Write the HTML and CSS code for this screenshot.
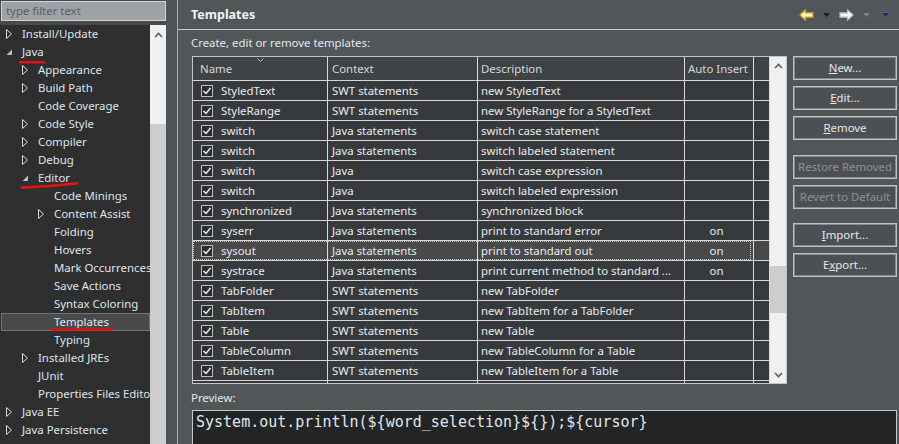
FILE: index.html
```html
<!DOCTYPE html>
<html>
<head>
<meta charset="utf-8">
<link rel="stylesheet" href="styles.css">
</head>
<body>
<div class="left">
  <div class="filter">type filter text</div>
  <div class="tree">
    <div class="tree-list">
      <div class="ti l0"><span class="exp"><svg class="tri-c" width="7" height="10" viewBox="0 0 7 10"><polygon points="0.5,0.5 5.5,5 0.5,9.5"/></svg></span>Install/Update</div>
      <div class="ti l0"><span class="exp"><svg class="tri-o" width="7" height="7" viewBox="0 0 7 7"><polygon points="6,0.5 6,6 0.5,6"/></svg></span>Java</div>
      <div class="ti l1"><span class="exp"><svg class="tri-c" width="7" height="10" viewBox="0 0 7 10"><polygon points="0.5,0.5 5.5,5 0.5,9.5"/></svg></span>Appearance</div>
      <div class="ti l1"><span class="exp"><svg class="tri-c" width="7" height="10" viewBox="0 0 7 10"><polygon points="0.5,0.5 5.5,5 0.5,9.5"/></svg></span>Build Path</div>
      <div class="ti l1"><span class="exp"></span>Code Coverage</div>
      <div class="ti l1"><span class="exp"><svg class="tri-c" width="7" height="10" viewBox="0 0 7 10"><polygon points="0.5,0.5 5.5,5 0.5,9.5"/></svg></span>Code Style</div>
      <div class="ti l1"><span class="exp"><svg class="tri-c" width="7" height="10" viewBox="0 0 7 10"><polygon points="0.5,0.5 5.5,5 0.5,9.5"/></svg></span>Compiler</div>
      <div class="ti l1"><span class="exp"><svg class="tri-c" width="7" height="10" viewBox="0 0 7 10"><polygon points="0.5,0.5 5.5,5 0.5,9.5"/></svg></span>Debug</div>
      <div class="ti l1"><span class="exp"><svg class="tri-o" width="7" height="7" viewBox="0 0 7 7"><polygon points="6,0.5 6,6 0.5,6"/></svg></span>Editor</div>
      <div class="ti l2"><span class="exp"></span>Code Minings</div>
      <div class="ti l2"><span class="exp"><svg class="tri-c" width="7" height="10" viewBox="0 0 7 10"><polygon points="0.5,0.5 5.5,5 0.5,9.5"/></svg></span>Content Assist</div>
      <div class="ti l2"><span class="exp"></span>Folding</div>
      <div class="ti l2"><span class="exp"></span>Hovers</div>
      <div class="ti l2"><span class="exp"></span>Mark Occurrences</div>
      <div class="ti l2"><span class="exp"></span>Save Actions</div>
      <div class="ti l2"><span class="exp"></span>Syntax Coloring</div>
      <div class="ti l2 sel"><span class="exp"></span>Templates</div>
      <div class="ti l2"><span class="exp"></span>Typing</div>
      <div class="ti l1"><span class="exp"><svg class="tri-c" width="7" height="10" viewBox="0 0 7 10"><polygon points="0.5,0.5 5.5,5 0.5,9.5"/></svg></span>Installed JREs</div>
      <div class="ti l1"><span class="exp"></span>JUnit</div>
      <div class="ti l1"><span class="exp"></span>Properties Files Editor</div>
      <div class="ti l0"><span class="exp"><svg class="tri-c" width="7" height="10" viewBox="0 0 7 10"><polygon points="0.5,0.5 5.5,5 0.5,9.5"/></svg></span>Java EE</div>
      <div class="ti l0"><span class="exp"><svg class="tri-c" width="7" height="10" viewBox="0 0 7 10"><polygon points="0.5,0.5 5.5,5 0.5,9.5"/></svg></span>Java Persistence</div>
      <svg class="marks" width="150" height="420" viewBox="0 0 150 420">
        <path d="M20 37.2 L44 37.2"/>
        <path d="M22 162.6 Q50 161.6 77 158.4"/>
        <path d="M52 304.5 L112 304.5"/>
      </svg>
    </div>
    <div class="vbar">
      <div class="vbar-up"><svg width="9" height="6" viewBox="0 0 9 6"><polyline points="1,5 4.5,1.5 8,5"/></svg></div>
      <div class="vbar-thumb"></div>
    </div>
  </div>
</div>
<div class="sash"></div>
<div class="view">
  <div class="titlebar">
    <span class="title">Templates</span>
    <div class="nav">
      <svg class="nav-back" width="15" height="12" viewBox="0 0 15 12"><path d="M0.8 6 L6.5 0.8 L6.5 3.8 L14 3.8 L14 8.2 L6.5 8.2 L6.5 11.2 Z"/></svg>
      <svg class="nav-dd dark" width="7" height="4" viewBox="0 0 7 4"><polygon points="0,0 7,0 3.5,4"/></svg>
      <svg class="nav-fwd" width="15" height="12" viewBox="0 0 15 12"><path d="M14.2 6 L8.5 0.8 L8.5 3.8 L1 3.8 L1 8.2 L8.5 8.2 L8.5 11.2 Z"/></svg>
      <svg class="nav-dd gray" width="7" height="4" viewBox="0 0 7 4"><polygon points="0,0 7,0 3.5,4"/></svg>
      <svg class="nav-menu" width="9" height="6" viewBox="0 0 9 6"><polygon points="0.5,0.5 8.5,0.5 4.5,5.5"/></svg>
    </div>
  </div>
  <div class="content">
    <div class="caption">Create, edit or remove templates:</div>
    <div class="main">
      <div class="table-box">
        <div class="grid">
          <div class="hrow">
            <div class="c c1 h1">Name<svg class="sort" width="7" height="4" viewBox="0 0 7 4"><polyline points="0.5,0.5 3.5,3.5 6.5,0.5"/></svg></div>
            <div class="c c2">Context</div>
            <div class="c c3">Description</div>
            <div class="c c4 hauto">Auto Insert</div>
            <div class="c c5"></div>
          </div>
          <div class="row"><div class="c c1"><svg class="cb" width="12" height="12" viewBox="0 0 12 12"><rect x="0.5" y="0.5" width="11" height="11"/><polyline points="2.5,6 5,8.5 9.5,3"/></svg>StyledText</div><div class="c c2">SWT statements</div><div class="c c3">new StyledText</div><div class="c c4"></div><div class="c c5"></div></div>
          <div class="row"><div class="c c1"><svg class="cb" width="12" height="12" viewBox="0 0 12 12"><rect x="0.5" y="0.5" width="11" height="11"/><polyline points="2.5,6 5,8.5 9.5,3"/></svg>StyleRange</div><div class="c c2">SWT statements</div><div class="c c3">new StyleRange for a StyledText</div><div class="c c4"></div><div class="c c5"></div></div>
          <div class="row"><div class="c c1"><svg class="cb" width="12" height="12" viewBox="0 0 12 12"><rect x="0.5" y="0.5" width="11" height="11"/><polyline points="2.5,6 5,8.5 9.5,3"/></svg>switch</div><div class="c c2">Java statements</div><div class="c c3">switch case statement</div><div class="c c4"></div><div class="c c5"></div></div>
          <div class="row"><div class="c c1"><svg class="cb" width="12" height="12" viewBox="0 0 12 12"><rect x="0.5" y="0.5" width="11" height="11"/><polyline points="2.5,6 5,8.5 9.5,3"/></svg>switch</div><div class="c c2">Java statements</div><div class="c c3">switch labeled statement</div><div class="c c4"></div><div class="c c5"></div></div>
          <div class="row"><div class="c c1"><svg class="cb" width="12" height="12" viewBox="0 0 12 12"><rect x="0.5" y="0.5" width="11" height="11"/><polyline points="2.5,6 5,8.5 9.5,3"/></svg>switch</div><div class="c c2">Java</div><div class="c c3">switch case expression</div><div class="c c4"></div><div class="c c5"></div></div>
          <div class="row"><div class="c c1"><svg class="cb" width="12" height="12" viewBox="0 0 12 12"><rect x="0.5" y="0.5" width="11" height="11"/><polyline points="2.5,6 5,8.5 9.5,3"/></svg>switch</div><div class="c c2">Java</div><div class="c c3">switch labeled expression</div><div class="c c4"></div><div class="c c5"></div></div>
          <div class="row"><div class="c c1"><svg class="cb" width="12" height="12" viewBox="0 0 12 12"><rect x="0.5" y="0.5" width="11" height="11"/><polyline points="2.5,6 5,8.5 9.5,3"/></svg>synchronized</div><div class="c c2">Java statements</div><div class="c c3">synchronized block</div><div class="c c4"></div><div class="c c5"></div></div>
          <div class="row"><div class="c c1"><svg class="cb" width="12" height="12" viewBox="0 0 12 12"><rect x="0.5" y="0.5" width="11" height="11"/><polyline points="2.5,6 5,8.5 9.5,3"/></svg>syserr</div><div class="c c2">Java statements</div><div class="c c3">print to standard error</div><div class="c c4">on</div><div class="c c5"></div></div>
          <div class="row sel"><div class="c c1"><svg class="cb" width="12" height="12" viewBox="0 0 12 12"><rect x="0.5" y="0.5" width="11" height="11"/><polyline points="2.5,6 5,8.5 9.5,3"/></svg>sysout</div><div class="c c2">Java statements</div><div class="c c3">print to standard out</div><div class="c c4">on</div><div class="c c5"></div><div class="focus"></div></div>
          <div class="row"><div class="c c1"><svg class="cb" width="12" height="12" viewBox="0 0 12 12"><rect x="0.5" y="0.5" width="11" height="11"/><polyline points="2.5,6 5,8.5 9.5,3"/></svg>systrace</div><div class="c c2">Java statements</div><div class="c c3">print current method to standard ...</div><div class="c c4">on</div><div class="c c5"></div></div>
          <div class="row"><div class="c c1"><svg class="cb" width="12" height="12" viewBox="0 0 12 12"><rect x="0.5" y="0.5" width="11" height="11"/><polyline points="2.5,6 5,8.5 9.5,3"/></svg>TabFolder</div><div class="c c2">SWT statements</div><div class="c c3">new TabFolder</div><div class="c c4"></div><div class="c c5"></div></div>
          <div class="row"><div class="c c1"><svg class="cb" width="12" height="12" viewBox="0 0 12 12"><rect x="0.5" y="0.5" width="11" height="11"/><polyline points="2.5,6 5,8.5 9.5,3"/></svg>TabItem</div><div class="c c2">SWT statements</div><div class="c c3">new TabItem for a TabFolder</div><div class="c c4"></div><div class="c c5"></div></div>
          <div class="row"><div class="c c1"><svg class="cb" width="12" height="12" viewBox="0 0 12 12"><rect x="0.5" y="0.5" width="11" height="11"/><polyline points="2.5,6 5,8.5 9.5,3"/></svg>Table</div><div class="c c2">SWT statements</div><div class="c c3">new Table</div><div class="c c4"></div><div class="c c5"></div></div>
          <div class="row"><div class="c c1"><svg class="cb" width="12" height="12" viewBox="0 0 12 12"><rect x="0.5" y="0.5" width="11" height="11"/><polyline points="2.5,6 5,8.5 9.5,3"/></svg>TableColumn</div><div class="c c2">SWT statements</div><div class="c c3">new TableColumn for a Table</div><div class="c c4"></div><div class="c c5"></div></div>
          <div class="row"><div class="c c1"><svg class="cb" width="12" height="12" viewBox="0 0 12 12"><rect x="0.5" y="0.5" width="11" height="11"/><polyline points="2.5,6 5,8.5 9.5,3"/></svg>TableItem</div><div class="c c2">SWT statements</div><div class="c c3">new TableItem for a Table</div><div class="c c4"></div><div class="c c5"></div></div>
          <div class="row"><div class="c c1"></div><div class="c c2"></div><div class="c c3"></div><div class="c c4"></div><div class="c c5"></div></div>
        </div>
        <div class="vscroll">
          <div class="sarrow"><svg width="9" height="6" viewBox="0 0 9 6"><polyline points="1,5 4.5,1.5 8,5"/></svg></div>
          <div class="strack"><div class="sthumb"></div></div>
          <div class="sarrow"><svg width="9" height="6" viewBox="0 0 9 6"><polyline points="1,1 4.5,4.5 8,1"/></svg></div>
        </div>
      </div>
      <div class="buttons">
        <div class="btn"><u>N</u>ew...</div>
        <div class="btn"><u>E</u>dit...</div>
        <div class="btn"><u>R</u>emove</div>
        <div class="btn dis grp1">Restore Removed</div>
        <div class="btn dis">Revert to Default</div>
        <div class="btn grp2"><u>I</u>mport...</div>
        <div class="btn">E<u>x</u>port...</div>
      </div>
    </div>
    <div class="plabel">Preview:</div>
    <div class="preview">System.out.println(${word_selection}${});${cursor}</div>
  </div>
</div>
</body>
</html>
```

FILE: styles.css
```css
body {
  margin: 0;
  width: 899px;
  height: 444px;
  overflow: hidden;
  display: flex;
  background: #515658;
  font-family: "Noto Sans", sans-serif;
  font-size: 11.4px;
  color: #e3e8ee;
}

/* ---------- left tree panel ---------- */
.left {
  width: 166px;
  flex-shrink: 0;
  display: flex;
  flex-direction: column;
  background: #46494c;
  overflow: hidden;
}
.filter {
  margin: 1px 0 4px 1px;
  height: 20px;
  flex-shrink: 0;
  box-sizing: border-box;
  border: 1px solid #d2d5d7;
  background: #9da2a7;
  color: #5a6065;
  padding-left: 4px;
  line-height: 18px;
  font-size: 11.4px;
}
.tree {
  flex: 1;
  display: flex;
  background: #2f2f2f;
  min-height: 0;
}
.tree-list {
  width: 150px;
  position: relative;
  overflow: hidden;
  white-space: nowrap;
  color: #dde6ef;
}
.ti {
  height: 18px;
  line-height: 18px;
  display: flex;
  align-items: center;
}
.l0 { padding-left: 6px; }
.l1 { padding-left: 22px; }
.l2 { padding-left: 38px; }
.exp {
  width: 16px;
  flex-shrink: 0;
  display: flex;
  align-items: center;
}
.tri-c polygon { fill: none; stroke: #d6d6d6; stroke-width: 1; }
.tri-o polygon { fill: #bdbdbd; }
.ti.sel {
  margin-left: 1px;
  padding-left: 37px;
  background: #4a4a4a;
  box-shadow: inset 0 0 0 1px #747474;
}
.marks {
  position: absolute;
  left: 0;
  top: 0;
  pointer-events: none;
}
.marks path {
  fill: none;
  stroke: #e01212;
  stroke-width: 2.6;
  stroke-linecap: round;
}
.vbar {
  width: 16px;
  background: #f0f0f0;
  display: flex;
  flex-direction: column;
}
.vbar-up {
  height: 99px;
  flex-shrink: 0;
  display: flex;
  justify-content: center;
  padding-top: 7px;
  box-sizing: border-box;
}
.vbar-up polyline,
.sarrow polyline {
  fill: none;
  stroke: #5f5f5f;
  stroke-width: 1.6;
}
.vbar-thumb {
  flex: 1;
  background: #cdcdcd;
}
.sash {
  width: 11px;
  flex-shrink: 0;
  background: #4f5357;
}

/* ---------- right view ---------- */
.view {
  flex: 1;
  min-width: 0;
  border-left: 1px solid #a7abae;
  display: flex;
  flex-direction: column;
  overflow: hidden;
}
.titlebar {
  height: 29px;
  flex-shrink: 0;
  border-bottom: 1px solid #c6c8ca;
  display: flex;
  align-items: center;
  justify-content: space-between;
  padding: 0 9px 0 13px;
}
.title {
  font-weight: bold;
  font-size: 12.5px;
  color: #f3f3f3;
}
.nav {
  display: flex;
  align-items: center;
}
.nav-back path { fill: #fff3c4; stroke: #dc9a1c; stroke-width: 1.2; }
.nav-fwd path { fill: #f5f5f5; stroke: #b9b9b9; stroke-width: 1.2; }
.nav-dd { margin-left: 9px; }
.nav-dd.dark polygon { fill: #1f1f1f; }
.nav-dd.gray polygon { fill: #7b7f82; }
.nav-fwd { margin-left: 9px; }
.nav-menu { margin-left: 11px; }
.nav-menu polygon { fill: #2b1d48; stroke: #6b54a3; stroke-width: 1; }

.content {
  flex: 1;
  min-height: 0;
  display: flex;
  flex-direction: column;
  padding: 0 2px 0 14px;
}
.caption {
  flex-shrink: 0;
  margin: 5px 0 5px -1px;
  line-height: 16px;
}
.main {
  flex-shrink: 0;
  display: flex;
  gap: 6px;
}
.table-box {
  width: 595px;
  height: 328px;
  flex-shrink: 0;
  box-sizing: border-box;
  border: 1px solid #c3c6c8;
  display: flex;
  overflow: hidden;
}
.grid {
  width: 577px;
  overflow: hidden;
  background: #373a3d;
}
.hrow, .row {
  display: flex;
  flex-shrink: 0;
  box-sizing: border-box;
  border-bottom: 1px solid #d9d9d9;
}
.hrow {
  height: 24px;
  background: #404346;
  color: #d3d8dd;
}
.row {
  height: 20px;
  position: relative;
  color: #e8ecef;
}
.row.sel { background: #49494a; }
.c {
  flex-shrink: 0;
  box-sizing: border-box;
  border-right: 1px solid #d9d9d9;
  white-space: nowrap;
  overflow: hidden;
  display: flex;
  align-items: center;
  padding-left: 4px;
}
.c1 { width: 135px; padding-left: 8px; }
.c2 { width: 150px; }
.c3 { width: 207px; padding-left: 3px; }
.c4 { width: 69px; justify-content: center; padding-left: 0; padding-right: 5px; }
.c5 { width: 16px; padding-left: 0; }
.h1 { padding-left: 7px; position: relative; }
.hauto { justify-content: flex-start; padding-left: 3px; padding-right: 0; }
.sort {
  position: absolute;
  left: 64px;
  top: 1px;
}
.sort polyline { fill: none; stroke: #bfc3c6; stroke-width: 1; }
.cb { margin-right: 8px; flex-shrink: 0; }
.cb rect { fill: #2c2c2c; stroke: #bdbdbd; stroke-width: 1; }
.cb polyline { fill: none; stroke: #f2f2f2; stroke-width: 1.5; }
.focus {
  position: absolute;
  left: 0;
  top: 0;
  width: 558px;
  height: 19px;
  box-sizing: border-box;
  border: 1px dotted #c4c4c4;
}
.vscroll {
  width: 16px;
  flex-shrink: 0;
  background: #f0f0f0;
  display: flex;
  flex-direction: column;
}
.sarrow {
  height: 17px;
  flex-shrink: 0;
  display: flex;
  align-items: center;
  justify-content: center;
}
.strack { flex: 1; }
.sthumb {
  margin-top: 192px;
  height: 47px;
  background: #cdcdcd;
}

.buttons {
  width: 104px;
  flex-shrink: 0;
  display: flex;
  flex-direction: column;
}
.btn {
  height: 24px;
  flex-shrink: 0;
  box-sizing: border-box;
  border: 1px solid #bfc2c4;
  box-shadow: inset 0 0 0 1px #85898c;
  background: #4c5054;
  text-align: center;
  line-height: 22px;
  color: #e8e8e8;
  margin-bottom: 6px;
  white-space: nowrap;
}
.btn.dis { color: #8d9195; }
.btn.grp1 { margin-top: 9px; }
.btn.grp2 { margin-top: 8px; }

.plabel {
  flex-shrink: 0;
  margin: 6px 0 4px -1px;
  line-height: 16px;
}
.preview {
  height: 50px;
  flex-shrink: 0;
  box-sizing: border-box;
  border: 1px solid #c6c8ca;
  background: #242424;
  font-family: "DejaVu Sans Mono", monospace;
  font-size: 15px;
  line-height: 20px;
  color: #dfe8f2;
  padding: 1px 0 0 3px;
  white-space: nowrap;
}
```
